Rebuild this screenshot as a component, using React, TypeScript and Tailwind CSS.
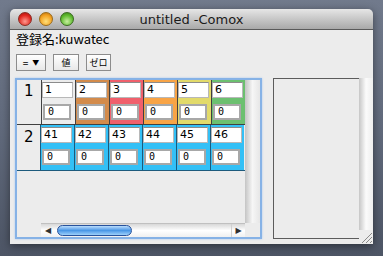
import React from "react";

const row1Colors = ["#ececec", "#d38b4b", "#f0606c", "#f8a446", "#e2da6a", "#6cc070"];

function Cell({ top, bg, line }: { top: string; bg: string; line: string }) {
  return (
    <div className="w-[34px] h-full flex flex-col border-l" style={{ backgroundColor: bg, borderColor: line }}>
      <div className="mt-[2px] w-[31px] h-[16px] bg-white border border-[#b8b8b8] border-t-[#8c8c8c] text-[11px] leading-[14px] pl-[2px] text-black font-['DejaVu_Sans',sans-serif]">
        {top}
      </div>
      <div className="mt-[6px] ml-[1px] w-[28px] h-[16px] bg-white border-2 border-[#a8a8a8] text-[10px] leading-[12px] pl-[3px] text-black font-['DejaVu_Sans_Mono',monospace]">
        0
      </div>
    </div>
  );
}

export default function App() {
  return (
    <div className="w-[383px] h-[256px] bg-gradient-to-b from-[#717a8c] via-[#616a7c] to-[#4d5565] pt-[9px] pl-[10px] font-['DejaVu_Sans',sans-serif] overflow-hidden">
      <div className="w-[363px] h-[235px] flex flex-col rounded-t-[5px] overflow-hidden shadow-[0_2px_8px_rgba(0,0,0,0.45)]">
        {/* title bar */}
        <div className="h-[21px] flex items-center relative bg-gradient-to-b from-[#e6e6e6] to-[#a9a9a9] border-b border-[#5a5a5a]">
          <div className="flex gap-[7px] ml-[8px]">
            <div className="w-[14px] h-[14px] rounded-full bg-[radial-gradient(circle_at_50%_70%,#ff9a90,#e0261e_60%,#a01010)] border border-[#8a2a20]" />
            <div className="w-[14px] h-[14px] rounded-full bg-[radial-gradient(circle_at_50%_70%,#ffe07a,#f2a020_60%,#b06a10)] border border-[#9a6a1a]" />
            <div className="w-[14px] h-[14px] rounded-full bg-[radial-gradient(circle_at_50%_70%,#c8f0a0,#5cb82c_60%,#3a7a1a)] border border-[#3a6a20]" />
          </div>
          <div className="absolute inset-0 flex items-center justify-center text-[13px] text-[#1a1a1a] pt-[1px]">
            untitled -Comox
          </div>
        </div>
        {/* content */}
        <div className="flex-1 bg-[#ececec] flex flex-col">
          <div className="ml-[6px] mt-[1px] h-[16px] text-[13px] leading-[16px] text-black font-['Noto_Sans_CJK_JP',sans-serif]">
            登録名:kuwatec
          </div>
          <div className="ml-[6px] mt-[7px] flex gap-[7px] h-[17px] font-['Noto_Sans_CJK_JP',sans-serif] text-[9px] text-black">
            <div className="w-[30px] h-full border border-[#8c8c8c] bg-gradient-to-b from-white to-[#e8e8e8] flex items-center justify-center gap-[4px]">
              <span className="text-[10px] leading-none">=</span>
              <span className="text-[7px] leading-none">▼</span>
            </div>
            <div className="w-[26px] h-full border border-[#8c8c8c] bg-gradient-to-b from-white to-[#e8e8e8] flex items-center justify-center leading-none">
              値
            </div>
            <div className="w-[25px] h-full border border-[#8c8c8c] bg-gradient-to-b from-white to-[#e8e8e8] flex items-center justify-center leading-none">
              ゼロ
            </div>
          </div>
          <div className="mt-[7px] flex flex-1">
            {/* left scroll box */}
            <div className="ml-[5px] w-[247px] h-[161px] border-2 border-[#86b2e6] shadow-[0_0_2px_#a8c8f0] flex flex-col">
              <div className="flex h-[143px]">
                <div className="w-[228px] flex flex-col">
                  <div className="h-[45px] flex border-b border-[#404040]">
                    <div className="w-[24px] text-[15px] leading-[18px] pt-[2px] pl-[7px] text-black">1</div>
                    {["1", "2", "3", "4", "5", "6"].map((t, i) => (
                      <Cell key={t} top={t} bg={row1Colors[i]} line="#404040" />
                    ))}
                  </div>
                  <div className="h-[46px] flex border-b border-[#1d5a7c]">
                    <div className="w-[24px] text-[15px] leading-[18px] pt-[3px] pl-[7px] text-black border-r border-[#404040] -mr-px">2</div>
                    {["41", "42", "43", "44", "45", "46"].map((t) => (
                      <Cell key={t} top={t} bg="#33c0f6" line="#1d5a7c" />
                    ))}
                  </div>
                </div>
                <div className="w-[15px] h-full bg-gradient-to-r from-[#c4c4c4] via-[#f6f6f6] to-[#e6e6e6]" />
              </div>
              <div className="flex h-[14px]">
                <div className="w-[24px] h-full" />
                <div className="w-[204px] h-full flex items-center bg-gradient-to-b from-[#d8d8d8] via-white to-[#f0f0f0] border-t border-[#c0c0c0]">
                  <div className="w-[14px] h-full flex items-center justify-center text-[8px] text-[#303030] leading-none">◀</div>
                  <div className="ml-[2px] w-[75px] h-[11px] rounded-full border border-[#28529c] bg-gradient-to-b from-[#b9dcfc] via-[#4a97e6] to-[#9cd0fa]" />
                  <div className="flex-1 h-full" />
                  <div className="w-[14px] h-full flex items-center justify-center text-[8px] text-[#303030] leading-none border-l border-[#d0d0d0]">▶</div>
                </div>
                <div className="w-[15px] h-full bg-[#ececec]" />
              </div>
            </div>
            {/* right panel */}
            <div className="ml-[11px] w-[100px] flex">
              <div className="w-[86px] h-[161px] border-t border-l border-b border-[#5c5c5c] bg-[#ececec]" />
              <div className="w-[14px] flex flex-col">
                <div className="flex-1 bg-gradient-to-r from-[#c6c6c6] via-[#fbfbfb] to-[#eeeeee]" />
                <div className="h-[14px] bg-[#ececec] flex items-end justify-end">
                  <svg width="14" height="14" viewBox="0 0 14 14">
                    <line x1="3" y1="13" x2="13" y2="3" stroke="#8a8a8a" strokeWidth="1" />
                    <line x1="7" y1="13" x2="13" y2="7" stroke="#8a8a8a" strokeWidth="1" />
                    <line x1="11" y1="13" x2="13" y2="11" stroke="#8a8a8a" strokeWidth="1" />
                  </svg>
                </div>
              </div>
            </div>
          </div>
        </div>
      </div>
    </div>
  );
}
